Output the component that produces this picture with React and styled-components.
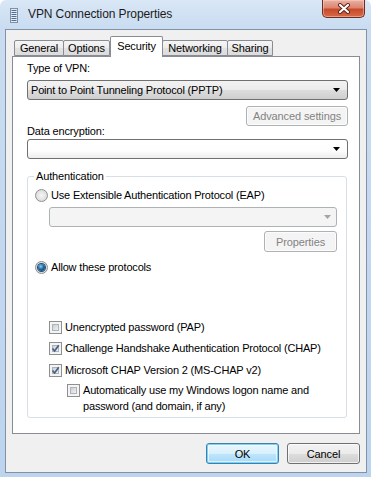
import styled, { createGlobalStyle } from "styled-components";

const GlobalStyle = createGlobalStyle`
  html, body { margin: 0; padding: 0; }
  body {
    font-family: "Liberation Sans", Arial, sans-serif;
    font-size: 11px;
    color: #000;
    background: #fff;
  }
`;

const Window = styled.div`
  width: 371px;
  height: 477px;
  box-sizing: border-box;
  display: flex;
  flex-direction: column;
  padding: 0 4px 4px 5px;
  border-radius: 6px 6px 0 0;
  background: linear-gradient(180deg, #d9e7f6 0%, #c9dcf1 28px, #bdd4ee 100%);
`;

const TitleBar = styled.div`
  height: 29px;
  display: flex;
  align-items: flex-start;
  padding-left: 5px;
`;

const AppIcon = styled.svg`
  margin-top: 8px;
  flex: none;
`;

const Title = styled.div`
  margin: 7px 0 0 10px;
  font-size: 12px;
  line-height: 15px;
  letter-spacing: -0.1px;
  color: #1b1b1b;
`;

const CloseButton = styled.div`
  margin-left: auto;
  margin-right: 2px;
  width: 43px;
  height: 18px;
  box-sizing: border-box;
  display: flex;
  align-items: center;
  justify-content: center;
  border: 1px solid #6e2b1f;
  border-top: none;
  border-radius: 0 0 5px 5px;
  background: linear-gradient(180deg, #eab1a3 0%, #dd8670 45%, #c84a2d 55%, #d66a47 100%);
  box-shadow: inset 0 0 0 1px rgba(255, 220, 210, 0.45);
`;

const Client = styled.div`
  flex: 1;
  display: flex;
  flex-direction: column;
  padding: 6px 6px 8px;
  background: #f0f0f0;
  border: 1px solid #8391a5;
`;

const TabStrip = styled.div`
  height: 20px;
  display: flex;
  align-items: flex-end;
  padding-left: 2px;
`;

const Tab = styled.div`
  position: relative;
  width: ${(p) => p.$w}px;
  height: ${(p) => (p.$active ? 21 : 16)}px;
  margin-left: ${(p) => (p.$first || p.$active ? 0 : -1)}px;
  margin-bottom: ${(p) => (p.$active ? -1 : 0)}px;
  z-index: ${(p) => (p.$active ? 1 : 0)};
  box-sizing: border-box;
  display: flex;
  align-items: center;
  justify-content: center;
  padding-bottom: ${(p) => (p.$active ? 2 : 0)}px;
  border: 1px solid #898c95;
  border-bottom: ${(p) => (p.$active ? "none" : "1px solid #898c95")};
  border-radius: 2px 2px 0 0;
  background: ${(p) =>
    p.$active ? "#fff" : "linear-gradient(180deg, #f5f5f5 0%, #ececec 50%, #e2e2e2 51%, #dcdcdc 100%)"};
  letter-spacing: -0.15px;
`;

const Panel = styled.div`
  flex: 1;
  display: flex;
  flex-direction: column;
  padding: 4px 11px 0 14px;
  background: #fff;
  border: 1px solid #898c95;
`;

const Label = styled.div`
  height: ${(p) => p.$h || 14}px;
  line-height: ${(p) => p.$h || 14}px;
  margin-top: ${(p) => p.$top || 0}px;
  letter-spacing: -0.15px;
`;

const Combo = styled.div`
  height: 20px;
  box-sizing: border-box;
  display: flex;
  align-items: center;
  justify-content: space-between;
  margin: ${(p) => p.$margin || "0"};
  padding: 0 ${(p) => (p.$disabled ? 5 : 7)}px 0 3px;
  border: 1px solid ${(p) => (p.$disabled ? "#adb2b5" : "#707070")};
  border-radius: 3px;
  background: ${(p) =>
    p.$disabled
      ? "#f4f4f4"
      : p.$plain
      ? "linear-gradient(180deg, #ffffff 0%, #fdfdfd 60%, #ededed 100%)"
      : "linear-gradient(180deg, #f2f2f2 0%, #ebebeb 50%, #dddddd 51%, #cfcfcf 100%)"};
  letter-spacing: -0.18px;
`;

const Button = styled.div`
  width: ${(p) => p.$w || 73}px;
  height: ${(p) => p.$h || 21}px;
  box-sizing: border-box;
  display: flex;
  align-items: center;
  justify-content: center;
  align-self: ${(p) => (p.$right ? "flex-end" : "auto")};
  margin: ${(p) => p.$margin || "0"};
  border-radius: 3px;
  letter-spacing: -0.1px;
  border: 1px solid #707070;
  background: linear-gradient(180deg, #f2f2f2 0%, #ebebeb 50%, #dddddd 51%, #cfcfcf 100%);
  box-shadow: inset 0 0 0 1px rgba(255, 255, 255, 0.7);

  ${(p) =>
    p.$disabled &&
    `
    color: #838383;
    border-color: #adb2b5;
    background: #f4f4f4;
    box-shadow: inset 0 0 0 1px #fcfcfc;
  `}

  ${(p) =>
    p.$default &&
    `
    border-color: #3c7fb1;
    background: linear-gradient(180deg, #eaf6fd 0%, #d9f0fc 50%, #bee6fd 51%, #a7d9f5 100%);
    box-shadow: inset 0 0 0 1px #7ad3f7, inset 0 0 0 2px rgba(255,255,255,0.6);
  `}
`;

const Group = styled.fieldset`
  margin: 10px 1px 0 0;
  padding: 5px 9px 3px 7px;
  min-width: 0;
  display: flex;
  flex-direction: column;
  border: 1px solid #d5dfe5;
  border-radius: 3px;
`;

const Legend = styled.legend`
  padding: 0 2px;
  margin-left: -1px;
  line-height: 14px;
  letter-spacing: -0.15px;
`;

const Option = styled.div`
  display: flex;
  align-items: ${(p) => (p.$multi ? "flex-start" : "center")};
  gap: 2px;
  margin-top: ${(p) => p.$top || 0}px;
  margin-left: ${(p) => p.$indent || 0}px;
  line-height: ${(p) => (p.$multi ? 16 : 14)}px;
  letter-spacing: -0.18px;
`;

const RadioCircle = styled.span`
  flex: none;
  width: 13px;
  height: 13px;
  box-sizing: border-box;
  border-radius: 50%;
  border: 1px solid #8e8f8f;
  display: flex;
  align-items: center;
  justify-content: center;
  background: radial-gradient(circle at 50% 50%, #f6f6f6 0%, #e3e3e3 55%, #cfcfcf 100%);
  margin-right: 1px;
`;

const RadioDot = styled.span`
  width: 7px;
  height: 7px;
  border-radius: 50%;
  background: radial-gradient(circle at 40% 35%, #8fd0f0 0%, #21679c 45%, #0b3a63 100%);
  box-shadow: 0 0 0 1px #1b4f78;
`;

const CheckBox = styled.span`
  flex: none;
  width: 13px;
  height: 13px;
  box-sizing: border-box;
  border: 1px solid #8e8f8f;
  background: #f4f4f4;
  padding: 2px;
  margin-top: ${(p) => (p.$multi ? 2 : 0)}px;
  margin-right: 1px;
  position: relative;
`;

const CheckInner = styled.span`
  display: block;
  width: 100%;
  height: 100%;
  box-sizing: border-box;
  border: 1px solid #aeb3b9;
  background: linear-gradient(135deg, #cbcfd5 0%, #eef0f2 100%);
`;

const CheckMark = styled.svg`
  position: absolute;
  left: 1px;
  top: 1px;
`;

const ButtonRow = styled.div`
  display: flex;
  justify-content: flex-end;
  gap: 8px;
  margin-top: 9px;
`;

const Arrow = ({ color = "#000" }) => (
  <svg width="7" height="4" viewBox="0 0 7 4">
    <path d="M0 0H7L3.5 4Z" fill={color} />
  </svg>
);

const Radio = ({ checked }) => <RadioCircle>{checked && <RadioDot />}</RadioCircle>;

const Check = ({ checked, multi }) => (
  <CheckBox $multi={multi}>
    <CheckInner />
    {checked && (
      <CheckMark width="9" height="9" viewBox="0 0 9 9">
        <path d="M1.5 4.5L3.6 7L7.8 1.3" fill="none" stroke="#4a5f86" strokeWidth="1.7" />
      </CheckMark>
    )}
  </CheckBox>
);

const tabs = [
  { name: "General", w: 50 },
  { name: "Options", w: 47 },
  { name: "Security", w: 53, active: true },
  { name: "Networking", w: 66 },
  { name: "Sharing", w: 46 },
];

export default function App() {
  return (
    <>
      <GlobalStyle />
      <Window>
        <TitleBar>
          <AppIcon width="8" height="15" viewBox="0 0 8 15">
            <rect x="0.5" y="0.5" width="7" height="14" fill="#e4ebf3" stroke="#7f8fa6" />
            {[2, 4, 6, 8, 10, 12].map((y) => (
              <rect key={y} x="1.5" y={y} width="5" height="1" fill="#4e6c94" />
            ))}
          </AppIcon>
          <Title>VPN Connection Properties</Title>
          <CloseButton>
            <svg width="14" height="11" viewBox="0 0 14 11">
              <path d="M3 2L11 9M11 2L3 9" stroke="#5a1f14" strokeWidth="4" strokeLinecap="round" />
              <path d="M3 2L11 9M11 2L3 9" stroke="#fff" strokeWidth="2.2" strokeLinecap="round" />
            </svg>
          </CloseButton>
        </TitleBar>
        <Client>
          <TabStrip>
            {tabs.map((t, i) => (
              <Tab key={t.name} $w={t.w} $active={t.active} $first={i === 0}>
                {t.name}
              </Tab>
            ))}
          </TabStrip>
          <Panel>
            <Label>Type of VPN:</Label>
            <Combo $margin="5px 0 0">
              <span>Point to Point Tunneling Protocol (PPTP)</span>
              <Arrow />
            </Combo>
            <Button $disabled $right $w={102} $h={20} $margin="6px 0 0">
              Advanced settings
            </Button>
            <Label $h={13} $top={-1}>
              Data encryption:
            </Label>
            <Combo $plain $margin="1px 0 0">
              <span />
              <Arrow />
            </Combo>
            <Group>
              <Legend>Authentication</Legend>
              <Option>
                <Radio />
                Use Extensible Authentication Protocol (EAP)
              </Option>
              <Combo $disabled $margin="5px 0 0 14px">
                <span />
                <Arrow color="#a4a4a4" />
              </Combo>
              <Button $disabled $right $margin="4px 0 0">
                Properties
              </Button>
              <Option $top={8}>
                <Radio checked />
                Allow these protocols
              </Option>
              <Option $top={46} $indent={14}>
                <Check />
                Unencrypted password (PAP)
              </Option>
              <Option $top={7} $indent={14}>
                <Check checked />
                Challenge Handshake Authentication Protocol (CHAP)
              </Option>
              <Option $top={8} $indent={14}>
                <Check checked />
                Microsoft CHAP Version 2 (MS-CHAP v2)
              </Option>
              <Option $top={5} $indent={32} $multi>
                <Check multi />
                <span>
                  Automatically use my Windows logon name and
                  <br />
                  password (and domain, if any)
                </span>
              </Option>
            </Group>
          </Panel>
          <ButtonRow>
            <Button $default>OK</Button>
            <Button>Cancel</Button>
          </ButtonRow>
        </Client>
      </Window>
    </>
  );
}
